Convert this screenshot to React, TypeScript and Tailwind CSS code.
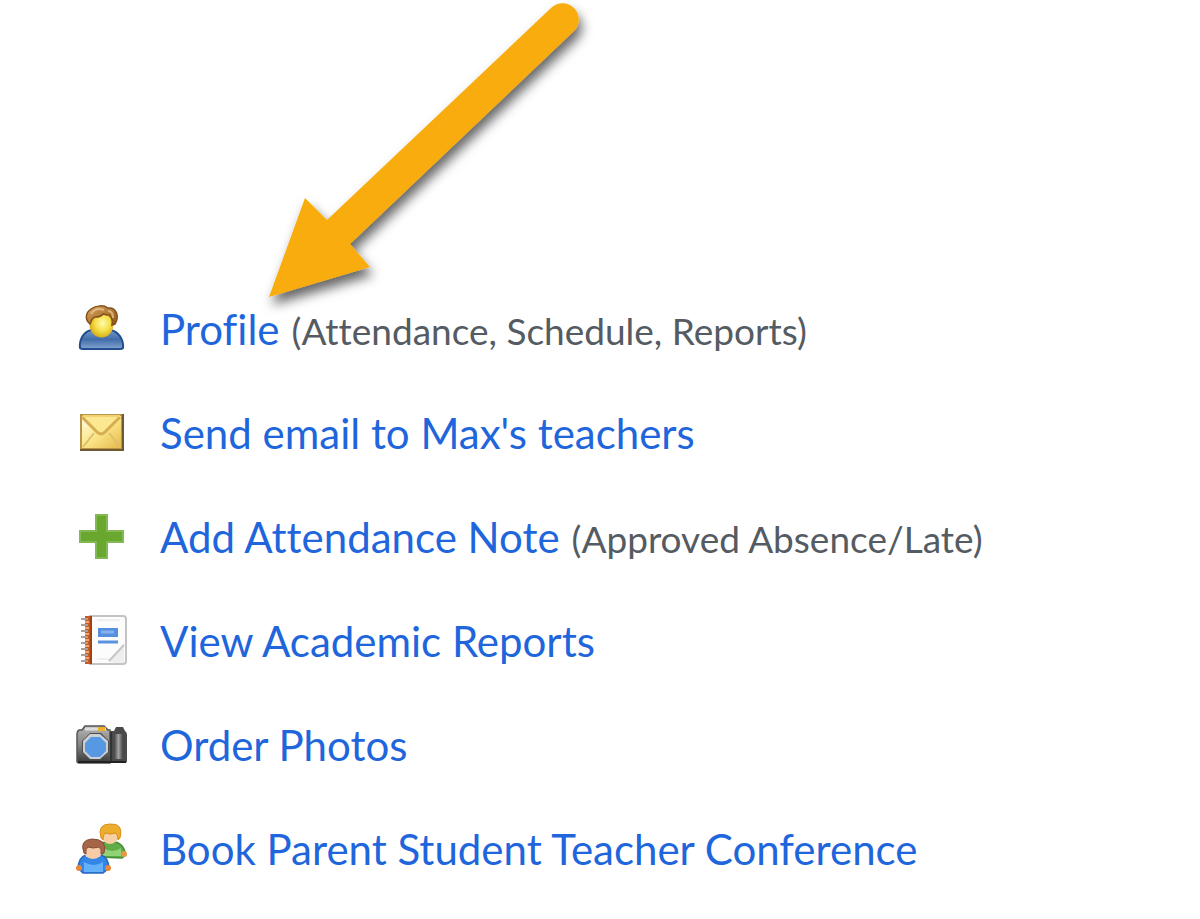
import type { ReactNode } from "react"

type MenuItem = {
  label: string
  note?: string
  icon: ReactNode
}

function UserIcon() {
  return (
    <svg viewBox="0 0 52 52" className="size-[52px] shrink-0" aria-hidden="true">
      <defs>
        <linearGradient id="hair" x1="0" y1="0" x2="1" y2="1">
          <stop offset="0" stopColor="#d9a760" />
          <stop offset="1" stopColor="#8f5415" />
        </linearGradient>
        <radialGradient id="face" cx=".55" cy=".45" r=".6">
          <stop offset="0" stopColor="#fffbb0" />
          <stop offset=".5" stopColor="#f6e04a" />
          <stop offset="1" stopColor="#d3a80f" />
        </radialGradient>
        <linearGradient id="shirt" x1="0" y1="0" x2="0" y2="1">
          <stop offset="0" stopColor="#7398c9" />
          <stop offset=".5" stopColor="#416da9" />
          <stop offset="1" stopColor="#84a6d2" />
        </linearGradient>
      </defs>
      <path d="M4 45c-1-9 4-17 12-18h18c8 1 14 9 13 18-1 1-2 1-3 1H7c-1 0-2 0-3-1z" fill="url(#shirt)" stroke="#214d91" strokeWidth="2" />
      <ellipse cx="25.5" cy="21.5" rx="12" ry="13" fill="url(#face)" />
      <path d="M14 21c-5-4-5-11 1-15 5-4 13-4 17-1 8-1 12 8 7 16l-3 1c1-4 0-7-3-10-3 0-4-1-6-1-2 3-5 3-8 3-3 1-4 4-5 7z" fill="url(#hair)" stroke="#84501c" strokeWidth="1.5" />
      <path d="M15 11c3-5 8-6 13-4M32 8c4 0 5 4 5 7" fill="none" stroke="#efcb91" strokeWidth="2" opacity=".7" />
    </svg>
  )
}

function EnvelopeIcon() {
  return (
    <svg viewBox="0 0 52 52" className="size-[52px] shrink-0" aria-hidden="true">
      <defs>
        <linearGradient id="paper" x1="0" y1="0" x2="1" y2="1">
          <stop offset="0" stopColor="#fffce5" />
          <stop offset=".5" stopColor="#fbe588" />
          <stop offset="1" stopColor="#e5b94b" />
        </linearGradient>
      </defs>
      <path d="M4 7h44v37H4z" fill="#6d5a30" />
      <path d="M4 7h42v35H4z" fill="#b99545" />
      <path d="M6 9h39v32H6z" fill="url(#paper)" />
      <path d="M7 40l11-14M44 40L33 26" stroke="#e0bf6c" strokeWidth="2" />
      <path d="M6 10l15 15q4 4 8 0l15-15" fill="#fbe890" stroke="#d5ae52" strokeWidth="3" />
      <path d="M7 9h37" stroke="#f3d274" strokeWidth="2" />
    </svg>
  )
}

function PlusIcon() {
  return (
    <svg viewBox="0 0 52 52" className="size-[52px] shrink-0" aria-hidden="true">
      <path d="M20 4h11v16h16v11H31v16H20V31H4V20h16z" fill="#6aa72e" stroke="#83b955" strokeWidth="2" />
    </svg>
  )
}

function NotebookIcon() {
  return (
    <svg viewBox="0 0 52 52" className="size-[52px] shrink-0" aria-hidden="true">
      <path d="M14 1h33q3 0 3 3v42q0 3-3 3H14z" fill="#fcfcfc" stroke="#c2c3c5" strokeWidth="2" />
      <path d="M21 5h23M21 44h12" stroke="#efefef" strokeWidth="2" />
      <path d="M32 47l16-18v16q0 3-3 3z" fill="#eeeeee" />
      <path d="M33 46l15-16" stroke="#c5c5c5" strokeWidth="2" />
      <path d="M9 1h7v48H9z" fill="#c65a20" />
      <path d="M15 1v48" stroke="#a33f10" strokeWidth="2" />
      <path d="M5 4h7M5 10h7M5 16h7M5 22h7M5 28h7M5 34h7M5 40h7M5 46h7" stroke="#aaa19b" strokeWidth="2" />
      <path d="M9 7h4M9 13h4M9 19h4M9 25h4M9 31h4M9 37h4M9 43h4" stroke="#f3a775" strokeWidth="2" />
      <path d="M22 13h20v9H22z" fill="#568fdd" />
      <path d="M25 17h13" stroke="#83b2ef" strokeWidth="3" />
      <path d="M22 27h20" stroke="#5a92de" strokeWidth="3" />
    </svg>
  )
}

function CameraIcon() {
  return (
    <svg viewBox="0 0 52 52" className="size-[52px] shrink-0" aria-hidden="true">
      <defs>
        <linearGradient id="body" x1="0" y1="0" x2="0" y2="1">
          <stop offset="0" stopColor="#b5b5b5" />
          <stop offset=".5" stopColor="#858585" />
          <stop offset="1" stopColor="#383838" />
        </linearGradient>
        <linearGradient id="grip" x1="0" y1="0" x2="1" y2="0">
          <stop offset="0" stopColor="#444444" />
          <stop offset=".5" stopColor="#a2a2a2" />
          <stop offset="1" stopColor="#444444" />
        </linearGradient>
      </defs>
      <path d="M38 12l2-4h7l2 4q2 1 2 4v26q0 2-2 2H34V12z" fill="#4a4a4a" />
      <path d="M1 15q0-3 2-4h3l3-4h19l4 4h2v33H3q-2 0-2-2z" fill="url(#body)" stroke="#555555" strokeWidth="1.5" />
      <path d="M9 10h21" stroke="#dddddd" strokeWidth="3" />
      <path d="M22 8h7v4h-7z" fill="#f1af2c" />
      <path d="M38 15h9v25h-9z" fill="url(#grip)" />
      <path d="M35 13v30" stroke="#333333" strokeWidth="2" />
      <path d="M2 43h48" stroke="#222222" strokeWidth="2" />
      <path d="M14 14h11l8 8v11l-8 8H14l-8-8V22z" fill="#4d4d4d" />
      <path d="M14 15h10l8 7v11l-8 7H14l-7-7V22z" fill="#cbd0d6" />
      <path d="M15 18h9l6 6v8l-6 6h-9l-6-6v-8z" fill="#5798e2" />
    </svg>
  )
}

function PeopleIcon() {
  return (
    <svg viewBox="0 0 52 52" className="size-[52px] shrink-0" aria-hidden="true">
      <path d="M23 34l1-12q2-3 7-3h8q6 1 9 7l2 6-4 3z" fill="#60ac49" stroke="#459035" strokeWidth="1.5" />
      <path d="M27 25q10 6 18 0v8H27z" fill="#91d276" />
      <circle cx="48" cy="31" r="3" fill="#e69a45" />
      <ellipse cx="34" cy="12" rx="9" ry="9" fill="#f6cfa3" />
      <path d="M25 15Q21 1 34 1q14-1 10 14l-2 2q0-5-2-7-6 2-11 0-2 2-2 7z" fill="#edae2d" stroke="#d98c20" strokeWidth="1" />
      <path d="M2 45q1-11 8-13h15q7 2 8 13l-6 5H7z" fill="#3386e5" stroke="#2767c6" strokeWidth="1.5" />
      <path d="M8 39q10 6 19 0v10H8z" fill="#63b1fa" />
      <circle cx="3" cy="45" r="3" fill="#e6883c" />
      <circle cx="32" cy="45" r="3" fill="#e6883c" />
      <ellipse cx="17" cy="27" rx="10" ry="9" fill="#f7cca7" />
      <path d="M8 30Q3 17 16 16q16 0 12 14l-3 1q1-5-2-7-6 2-11 0-3 2-2 7z" fill="#a66548" stroke="#874c36" strokeWidth="1" />
    </svg>
  )
}

const items: MenuItem[] = [
  { label: "Profile", note: "(Attendance, Schedule, Reports)", icon: <UserIcon /> },
  { label: "Send email to Max's teachers", icon: <EnvelopeIcon /> },
  { label: "Add Attendance Note", note: "(Approved Absence/Late)", icon: <PlusIcon /> },
  { label: "View Academic Reports", icon: <NotebookIcon /> },
  { label: "Order Photos", icon: <CameraIcon /> },
  { label: "Book Parent Student Teacher Conference", icon: <PeopleIcon /> },
]

// Pointer laid over the page, its tip lands on the Profile link
function Arrow() {
  return (
    <svg
      viewBox="0 0 360 330"
      className="pointer-events-none absolute left-[250px] top-0 h-[330px] w-[360px]"
      aria-hidden="true"
    >
      <defs>
        <filter id="arrow-shadow" x="-10%" y="-10%" width="125%" height="125%">
          <feDropShadow dx="3" dy="8" stdDeviation="6" floodColor="#000000" floodOpacity=".6" />
        </filter>
      </defs>
      <path
        d="M19 297L55 198L77 220L301 8A16 16 0 0 1 324 31L100 244L120 267Z"
        fill="#f9ac0b"
        filter="url(#arrow-shadow)"
      />
    </svg>
  )
}

export default function App() {
  return (
    <main className="relative min-h-screen bg-white pt-[301px] pb-8 pl-[76px] font-['Lato',sans-serif] [font-variant-ligatures:none]">
      <ul className="flex flex-col gap-12">
        {items.map((item) => (
          <li key={item.label} className="flex items-center gap-8">
            {item.icon}
            <div className="text-[42px] leading-[56px] whitespace-nowrap">
              <a href="#" className="text-[#1f66dc] hover:underline">{item.label}</a>
              {item.note && <span className="ml-3 text-[37px] leading-none text-[#555b62]">{item.note}</span>}
            </div>
          </li>
        ))}
      </ul>
      <Arrow />
    </main>
  )
}
